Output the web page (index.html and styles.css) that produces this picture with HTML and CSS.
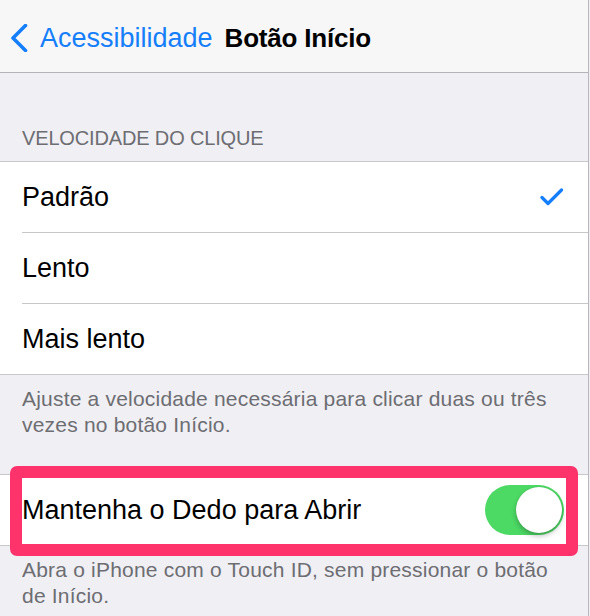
FILE: index.html
```html
<!DOCTYPE html>
<html lang="pt">
<head>
<meta charset="utf-8">
<link rel="stylesheet" href="styles.css">
</head>
<body>
<div class="screen">
  <header class="nav">
    <svg class="chev" width="20" height="28" viewBox="0 0 20 28"><path d="M15.5 1.5 L3 14 L15.5 26.5" fill="none" stroke="#157efb" stroke-width="3.6" stroke-linecap="round" stroke-linejoin="round"/></svg>
    <span class="back">Acessibilidade</span>
    <span class="title">Botão Início</span>
  </header>

  <div class="sec-head">VELOCIDADE DO CLIQUE</div>
  <div class="group">
    <div class="row"><span>Padrão</span>
      <svg class="check" width="24" height="18" viewBox="0 0 24 18"><path d="M2 9.5 L8 15.5 L21.5 2" fill="none" stroke="#157efb" stroke-width="3.2" stroke-linecap="round" stroke-linejoin="round"/></svg>
    </div>
    <div class="row"><span>Lento</span></div>
    <div class="row"><span>Mais lento</span></div>
  </div>
  <div class="sec-foot">Ajuste a velocidade necessária para clicar duas ou três vezes no botão Início.</div>

  <div class="group group2">
    <div class="row"><span>Mantenha o Dedo para Abrir</span>
      <div class="toggle"><div class="knob"></div></div>
    </div>
    <div class="highlight"></div>
  </div>
  <div class="sec-foot">Abra o iPhone com o Touch ID, sem pressionar o botão de Início.</div>
</div>
</body>
</html>
```
FILE: styles.css
```css
html, body {
  margin: 0;
  padding: 0;
}
body {
  background: #efeff4;
  font-family: "Liberation Sans", Arial, sans-serif;
  width: 590px;
  height: 616px;
  overflow: hidden;
}
.screen {
  width: 588px;
  height: 616px;
  border-right: 1px solid #b8b8bc;
  background: #efeff4;
}
.nav {
  height: 72px;
  box-sizing: border-box;
  padding-top: 4px;
  background: #f7f7f7;
  border-bottom: 1px solid #b4b4b6;
  display: flex;
  align-items: center;
  padding-left: 10px;
}
.nav {
  height: 73px;
}
.chev {
  display: block;
  margin-top: -1px;
}
.back {
  color: #157efb;
  font-size: 27px;
  margin-left: 10px;
}
.title {
  color: #000;
  font-size: 26px;
  font-weight: bold;
  margin-left: 12px;
  letter-spacing: -0.2px;
}
.sec-head {
  color: #6d6d72;
  font-size: 20px;
  letter-spacing: -0.15px;
  line-height: 26px;
  padding: 52px 22px 10px;
}
.group {
  background: #fff;
  border-top: 1px solid #c8c7cc;
  border-bottom: 1px solid #c8c7cc;
}
.row {
  height: 70px;
  margin-left: 22px;
  padding-right: 24px;
  display: flex;
  align-items: center;
  justify-content: space-between;
  font-size: 27px;
  color: #000;
}
.row + .row {
  border-top: 1px solid #c8c7cc;
}
.check {
  display: block;
}
.sec-foot {
  color: #6d6d72;
  font-size: 21px;
  letter-spacing: 0.2px;
  line-height: 26px;
  padding: 11px 24px 0 22px;
}
.group2 {
  margin-top: 36px;
  position: relative;
}
.toggle {
  width: 79px;
  height: 50px;
  border-radius: 25px;
  background: #4cd964;
  position: relative;
}
.knob {
  position: absolute;
  right: 2px;
  top: 2px;
  width: 46px;
  height: 46px;
  border-radius: 50%;
  background: #fff;
  box-shadow: 0 3px 5px rgba(0,0,0,0.25), 0 0 1px rgba(0,0,0,0.2);
}
.highlight {
  position: absolute;
  left: 10px;
  top: -9px;
  width: 568px;
  height: 90px;
  box-sizing: border-box;
  border: 12px solid #fe336c;
  border-radius: 7px;
  pointer-events: none;
}
```
